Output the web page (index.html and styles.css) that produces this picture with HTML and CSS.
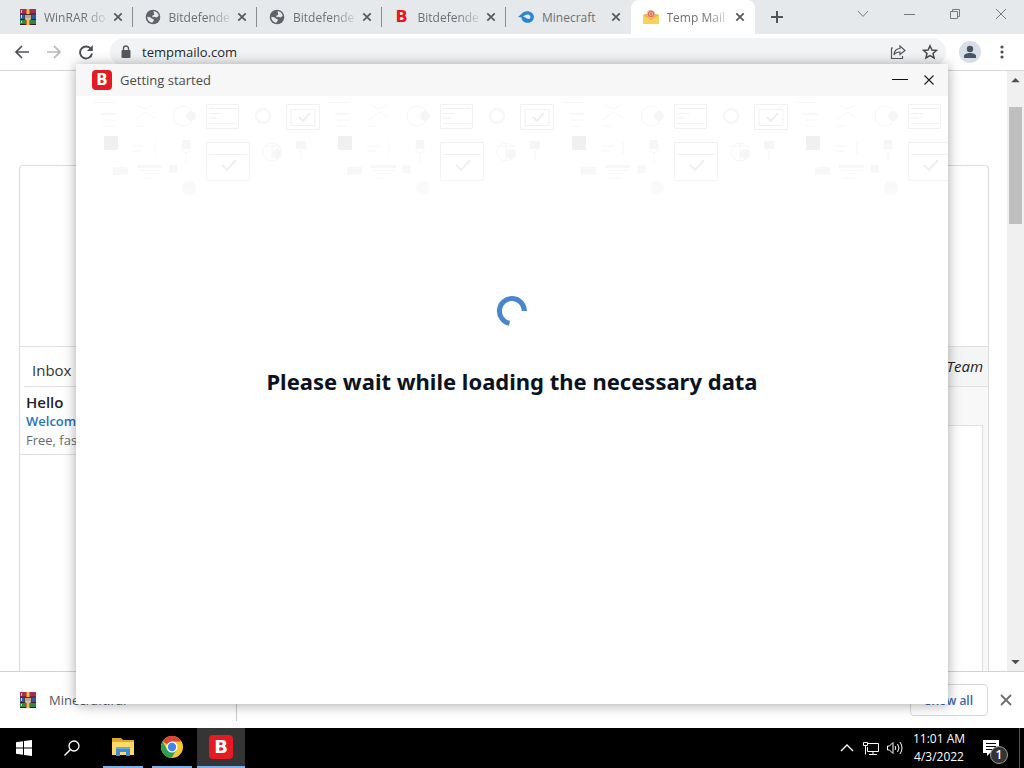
FILE: index.html
```html
<!DOCTYPE html>
<html lang="en">
<head>
<meta charset="utf-8">
<meta name="viewport" content="width=device-width, initial-scale=1">
<title>Temp Mail</title>
<link rel="stylesheet" href="styles.css">
</head>
<body>
<svg class="defs" aria-hidden="true">
  <symbol id="winrar" viewBox="0 0 16 16">
    <path fill="#a8304e" d="M0 0h16v5H0z"/><path fill="#2c5aa8" d="M0 5h16v5H0z"/><path fill="#2b8a3c" d="M0 10h16v6H0z"/>
    <path fill="#3b1828" d="M0 4.500h16v1H0zM0 10h16v1H0zM0 15h16v1H0z"/>
    <path fill="#d8d2e4" d="M1 1h1v3H1zM1 6h1v3H1zM1 12h1v2H1z"/>
    <path fill="#d9692e" d="M6 0h4v16H6z"/><path fill="#f3c24c" d="M7 0h2v5H7zM7 11h2v5H7z"/>
    <path fill="#58301c" d="M4.500 5h7v6h-7z"/><path fill="none" stroke="#f4ead8" stroke-width="1.300" d="M6 6v4h4V6M8 6v3"/>
  </symbol>
  <symbol id="globe" viewBox="0 0 16 16">
    <circle cx="8" cy="8" r="7.300" fill="#5f6368"/>
    <path fill="#e7eaed" d="M8.500 2.200c2.800 0 5 2.200 5.200 4.800l-2.200 1.400-2-.6-1.800.6-.5-1.700 2-1-.2-1.200zM2.300 7.800l3 .4 1.700 1.600 1.700.4v1.600l-1.500 1.900C4.400 13.300 2.200 10.800 2.300 7.800z"/>
  </symbol>
  <symbol id="cross" viewBox="0 0 16 16"><path d="M4.300 4.300l7.400 7.400m0-7.400l-7.400 7.400" fill="none" stroke="currentColor" stroke-width="1.700"/></symbol>
</svg>

<div class="desktop">
  <section class="browser">
    <header class="tabstrip">
      <nav class="tabs">
        <div class="tab"><svg class="icon"><use href="#winrar"/></svg><span class="tab-title">WinRAR do</span><button class="tab-close" aria-label="Close tab"><svg class="icon"><use href="#cross"/></svg></button></div>
        <div class="tab"><svg class="icon"><use href="#globe"/></svg><span class="tab-title">Bitdefende</span><button class="tab-close" aria-label="Close tab"><svg class="icon"><use href="#cross"/></svg></button></div>
        <div class="tab"><svg class="icon"><use href="#globe"/></svg><span class="tab-title">Bitdefende</span><button class="tab-close" aria-label="Close tab"><svg class="icon"><use href="#cross"/></svg></button></div>
        <div class="tab"><span class="b-favicon">B</span><span class="tab-title">Bitdefende</span><button class="tab-close" aria-label="Close tab"><svg class="icon"><use href="#cross"/></svg></button></div>
        <div class="tab no-line"><svg class="icon" viewBox="0 0 16 16"><path fill="#2a86d1" d="M0 8L5 3.500C8 1.500 11.500 1.800 13.800 3.800c2.800 2.400 2.700 6.200.2 8.400-2.700 2.400-7.300 2.200-9.500-.7C3.800 10.500 3.500 9.500 3.600 8.600z"/><path fill="#e7eaed" d="M5 7.800C7 5.800 9.500 5 11.300 5.900c1.700.9 1.600 3.300-.1 4-1.900.8-2.700-1.500-6.200-2.100z"/></svg><span class="tab-title whole">Minecraft</span><button class="tab-close" aria-label="Close tab"><svg class="icon"><use href="#cross"/></svg></button></div>
        <div class="tab active"><svg class="icon" viewBox="0 0 16 16"><path fill="#e5b83e" d="M0 6l3-1h10l3 1v9H0z"/><circle cx="8" cy="5" r="4" fill="#f4b6a8"/><circle cx="8" cy="5" r="2.600" fill="none" stroke="#e0705c" stroke-width="1.200"/><circle cx="8" cy="5" r="1" fill="#dc5440"/><path fill="#f6d25c" d="M0 6l8 5 8-5v9H0z"/></svg><span class="tab-title">Temp Mail</span><button class="tab-close" aria-label="Close tab"><svg class="icon"><use href="#cross"/></svg></button></div>
      </nav>
      <button class="new-tab" aria-label="New tab"><svg class="icon" viewBox="0 0 16 16"><path d="M8 2v12M2 8h12" stroke="#50555a" stroke-width="2"/></svg></button>
      <div class="window-buttons">
        <button aria-label="Search tabs"><svg class="icon" viewBox="0 0 16 16"><path d="M3 5l5 5.500L13 5" fill="none" stroke="currentColor"/></svg></button>
        <button aria-label="Minimize"><svg class="icon" viewBox="0 0 16 16"><path d="M3 8.500h11" stroke="currentColor"/></svg></button>
        <button aria-label="Restore"><svg class="icon" viewBox="0 0 16 16"><path d="M3.500 5.500h7v7h-7zM5.500 5.500v-2h7v7h-2" fill="none" stroke="currentColor"/></svg></button>
        <button aria-label="Close"><svg class="icon" viewBox="0 0 16 16"><path d="M3 3l10 10M13 3L3 13" stroke="currentColor"/></svg></button>
      </div>
    </header>

    <div class="toolbar">
      <button aria-label="Back"><svg class="icon" viewBox="0 0 16 16"><path d="M15 8H2M8 2L2 8l6 6" fill="none" stroke="#4d5156" stroke-width="1.700"/></svg></button>
      <button aria-label="Forward"><svg class="icon" viewBox="0 0 16 16"><path d="M1 8h13M8 2l6 6-6 6" fill="none" stroke="#b4b6b9" stroke-width="1.700"/></svg></button>
      <button aria-label="Reload"><svg class="icon" viewBox="0 0 16 16"><path d="M13 5A6 6 0 1 0 14 9.500" fill="none" stroke="#4d5156" stroke-width="1.900"/><path fill="#4d5156" d="M14.800 1v6H9z"/></svg></button>
      <div class="address">
        <svg class="icon" viewBox="0 0 16 16"><path fill="#55595e" d="M4.500 6h7q1 0 1 1v6q0 1-1 1h-7q-1 0-1-1V7q0-1 1-1z"/><path d="M5.500 6.500V4.500a2.500 2.500 0 0 1 5 0v2" fill="none" stroke="#55595e" stroke-width="1.400"/></svg>
        <input class="url" type="text" value="tempmailo.com" aria-label="Address">
        <button aria-label="Share"><svg class="icon" viewBox="0 0 16 16"><path d="M3 4H1.500v10.500h11V12M10 2l5 4.500-5 4V8C7 8 5 9 4 11c0-4 2.500-6.500 6-6.500z" fill="none" stroke="#55595e" stroke-width="1.200"/></svg></button>
        <button aria-label="Bookmark"><svg class="icon" viewBox="0 0 16 16"><path d="M8 1.800l1.900 4.200 4.600.4-3.500 3 1.100 4.500L8 11.500l-4.100 2.400L5 9.400l-3.500-3 4.600-.4z" fill="none" stroke="#45494e" stroke-width="1.500"/></svg></button>
      </div>
      <button class="avatar" aria-label="Profile"><svg class="icon" viewBox="0 0 16 16"><circle cx="8" cy="5" r="3.200" fill="#4a5362"/><path fill="#4a5362" d="M2 14v-2c0-4 12-4 12 0v2z"/></svg></button>
      <button aria-label="Menu"><svg class="icon" viewBox="0 0 16 16"><g fill="#4d5156"><circle cx="8" cy="3" r="1.600"/><circle cx="8" cy="8" r="1.600"/><circle cx="8" cy="13" r="1.600"/></g></svg></button>
    </div>

    <div class="viewport">
      <main class="page">
        <div class="mailbox">
          <div class="mail-top"></div>
          <div class="panes">
            <section class="list">
              <h2 class="list-title">Inbox</h2>
              <a class="mail" href="#"><strong>Hello</strong><span class="subject">Welcome</span><span class="preview">Free, fast</span></a>
            </section>
            <section class="reader">
              <div class="from"><em>Team</em></div>
              <div class="reader-body"></div>
            </section>
          </div>
        </div>
      </main>
      <div class="scrollbar">
        <svg class="arrow" viewBox="0 0 16 16"><path fill="#505050" d="M4 10l4-4 4 4z"/></svg>
        <div class="track"><div class="thumb"></div></div>
        <svg class="arrow" viewBox="0 0 16 16"><path fill="#505050" d="M4 6l4 4 4-4z"/></svg>
      </div>
    </div>

    <footer class="downloads">
      <div class="download"><svg class="icon"><use href="#winrar"/></svg><span>Minecraft.rar</span></div>
      <button class="show-all">Show all</button>
      <button class="close-downloads" aria-label="Close downloads"><svg class="icon" viewBox="0 0 16 16"><path d="M3 3l10 10M13 3L3 13" stroke="#6a6e72" stroke-width="1.800"/></svg></button>
    </footer>
  </section>

  <section class="dialog" role="dialog" aria-labelledby="dialog-title">
    <header class="dialog-bar">
      <span class="b-logo">B</span>
      <h1 id="dialog-title" class="dialog-title">Getting started</h1>
      <button aria-label="Minimize"><svg class="icon" viewBox="0 0 16 16"><path d="M0 7.500h16" stroke="#111"/></svg></button>
      <button aria-label="Close"><svg class="icon" viewBox="0 0 16 16"><path d="M3.500 3.500l9 9m0-9l-9 9" stroke="#222" stroke-width="1.200"/></svg></button>
    </header>
    <div class="dialog-body">
      <svg class="pattern" aria-hidden="true">
        <defs>
          <pattern id="tile" x="15" y="0" width="234" height="130" patternUnits="userSpaceOnUse">
            <g fill="none" stroke="#f6f6f6">
              <path d="M3 6.500h21M12 24h13M12 30h10"/>
              <path d="M46 9l8 4 8-4M44 24l10-8 10 6M44 30h8"/>
              <circle cx="92" cy="20" r="10"/><circle cx="172" cy="20" r="7" stroke-width="2"/>
              <circle cx="181" cy="56" r="9"/><path d="M172 50h18M181 47v18M205 50l5 6 5-6M210 56v8"/>
              <path d="M42 50h12M42 55h9M64 46v12M91 48q4-5 8 0v6q-4 6-8 0zM95 58v8"/>
              <path d="M46 70.500h25M48 74.500h22M50 82h12M24 78l6-8 7 8"/>
            </g>
            <path d="M10 18h15M115.500 8.500h32v24h-32zM118 12.500h28M118 17.500h12M118 22h8M118 27.500h28M195.500 8.500h33v25h-33zM200 13.500h24v16h-24zM115.500 46.500h43v38h-43zM118 58.500h38" fill="none" stroke="#f1f1f1"/>
            <path d="M208 21l4 4 7-8M131 69l5 5 9-10" fill="none" stroke="#eee" stroke-width="2"/>
            <path fill="#f0f0f0" d="M13 40h14v14H13z"/>
            <g fill="#f6f6f6"><path d="M22 71h15v8H22zM91 44h8v9h-8zM78 69h8v8h-8zM46 69h25v3H46zM205 45h10v8h-10z"/><circle cx="100" cy="20" r="5"/><circle cx="186" cy="58" r="5"/><circle cx="98" cy="92" r="7"/></g>
          </pattern>
        </defs>
        <rect x="15" width="100%" height="100%" fill="url(#tile)"/>
      </svg>
      <div class="loading" role="status">
        <svg class="spinner" viewBox="0 0 32 32"><path d="M28.400 16A12.500 12.500 0 1 0 13.500 28.300" fill="none" stroke="#4a86cf" stroke-width="5"/></svg>
        <p class="message">Please wait while loading the necessary data</p>
      </div>
    </div>
  </section>

  <footer class="taskbar">
    <button class="task" aria-label="Start"><svg class="icon" viewBox="0 0 16 16"><path fill="#fff" d="M0 2.200l7-1v6.300H0zM8 1l8-1v7.500H8zM0 8.500h7v6.300l-7-1zM8 8.500h8V16l-8-1z"/></svg></button>
    <button class="task" aria-label="Search"><svg class="icon" viewBox="0 0 16 16"><circle cx="10" cy="6" r="5" fill="none" stroke="#fff" stroke-width="1.300"/><path d="M6.500 9.500L.5 15.500" stroke="#fff" stroke-width="1.400"/></svg></button>
    <button class="task running" aria-label="File Explorer"><svg class="task-icon" viewBox="0 0 24 24"><path fill="#e3a72f" d="M1 3h9l2 2h11v15H1z"/><path fill="#ffd968" d="M1 7h22v13H1z"/><path fill="#3f8cd0" d="M5 13h14v8h-4v-4H9v4H5z"/><path fill="#67acdf" d="M5 12h14v2H5z"/></svg></button>
    <button class="task running" aria-label="Chrome"><svg class="task-icon" viewBox="0 0 24 24"><circle cx="12" cy="12" r="11" fill="#f8c82e"/><path fill="#dc4437" d="M12 12L2.500 6.500A11 11 0 0 1 21.500 6.500H12z"/><path fill="#2f9e55" d="M2.500 6.500A11 11 0 0 0 11.500 23L16.500 14.500 12 12 7.200 14.800z"/><circle cx="12" cy="12" r="5.500" fill="#fff"/><circle cx="12" cy="12" r="4.200" fill="#4385ee"/></svg></button>
    <button class="task running current" aria-label="Bitdefender"><span class="b-logo large">B</span></button>
    <div class="tray">
      <svg class="icon" viewBox="0 0 16 16"><path d="M2 11l6-6 6 6" fill="none" stroke="#fff" stroke-width="1.400"/></svg>
      <svg class="icon" viewBox="0 0 16 16"><path d="M5 3.500h10.500v8H4.500V7M10 12v2.500M6 14.500h8M.5 2.500h4v3h-4zM2.500 5.500v9" fill="none" stroke="#fff"/></svg>
      <svg class="icon" viewBox="0 0 16 16"><path d="M.5 6h2l3.500-3.500v11L2.500 10h-2zM8 6q1.500 2 0 4M10.500 4q3 4 0 8M13 2q4 6 0 12" fill="none" stroke="#fff"/></svg>
      <time class="clock"><span>11:01 AM</span><span>4/3/2022</span></time>
      <button class="notify" aria-label="Notifications"><svg class="note" viewBox="0 0 18 18"><path fill="#fff" d="M1 1h16v13H8l-3 3v-3H1z"/><path d="M4 4.500h10M4 7.500h10M4 10.500h7" stroke="#000"/></svg><span class="badge">1</span></button>
    </div>
  </footer>
</div>
</body>
</html>
```
FILE: styles.css
```css
* { box-sizing: border-box; }

body {
  margin: 0;
  font-family: "Open Sans", "Noto Sans", sans-serif;
  font-size: 12px;
  color: #222;
}

button {
  display: flex;
  align-items: center;
  justify-content: center;
  flex: none;
  padding: 0;
  border: 0;
  background: none;
  color: inherit;
  font: inherit;
}

.defs { position: absolute; width: 0; height: 0; }
.icon { display: block; flex: none; width: 16px; height: 16px; }

.desktop {
  position: relative;
  display: flex;
  flex-direction: column;
  height: 100vh;
  overflow: hidden;
}

.browser { display: flex; flex: 1; flex-direction: column; min-height: 0; background: #fff; }

/* Tab strip */
.tabstrip { display: flex; align-items: stretch; height: 34px; padding-left: 8px; background: #e5e9ec; }
.tabs { display: flex; flex: 0 1 747px; min-width: 0; }
.tab {
  display: flex;
  flex: 1;
  align-items: center;
  gap: 8px;
  min-width: 0;
  padding: 0 7px 0 12px;
  color: #6c7074;
  background: linear-gradient(#8a8d90, #8a8d90) right center / 1px 20px no-repeat;
}
.tab.no-line { background: none; }
.tab.active { border-radius: 8px 8px 0 0; background: #fff; }
.tab-title {
  flex: 1;
  min-width: 0;
  margin-right: -8px;
  white-space: nowrap;
  mask-image: linear-gradient(to right, #000 60%, transparent);
}
.tab-title.whole { mask-image: none; }
.tab-close { color: #55595e; }
.b-favicon {
  width: 16px;
  color: #ea1420;
  font: bold 16px/16px "DejaVu Sans", sans-serif;
  text-align: center;
}
.new-tab { width: 44px; }
.window-buttons { display: flex; margin-left: auto; padding-bottom: 6px; color: #777b80; }
.window-buttons button { width: 46px; }

/* Toolbar */
.toolbar {
  display: flex;
  align-items: center;
  gap: 16px;
  height: 37px;
  padding: 0 14px;
  border-bottom: 1px solid #d5d7d9;
}
.address {
  display: flex;
  flex: 1;
  align-items: center;
  gap: 16px;
  height: 28px;
  padding: 0 8px;
  border-radius: 14px;
  background: #f1f3f4;
}
.url {
  flex: 1;
  min-width: 0;
  margin-left: -8px;
  padding: 0;
  border: 0;
  background: none;
  color: #26292c;
  font: inherit;
  font-size: 13px;
}
.avatar { width: 22px; height: 22px; margin: 0 -3px; border-radius: 50%; background: #d8dee8; }

/* Web page */
.viewport { display: flex; flex: 1; min-height: 0; }
.page { display: flex; flex: 1; min-width: 0; padding: 94px 18px 0 19px; }
.mailbox {
  display: flex;
  flex: 1;
  flex-direction: column;
  border: 1px solid #dcdcdc;
  border-bottom: 0;
  border-radius: 4px 4px 0 0;
}
.mail-top { height: 180px; }
.panes { display: grid; flex: 1; grid-template-columns: 1fr 2fr; border-top: 1px solid #dfdfdf; }
.list-title {
  height: 40px;
  margin: 0 0 0 4px;
  padding: 3px 0 0 8px;
  border-bottom: 1px solid #dfdfdf;
  color: #333;
  font-size: 15px;
  font-weight: 400;
  line-height: 40px;
}
.mail {
  display: flex;
  flex-direction: column;
  height: 68px;
  padding: 6px;
  border-bottom: 1px solid #dfdfdf;
  color: #222;
  font-size: 13px;
  line-height: 19px;
  text-decoration: none;
}
.mail strong { font-size: 15px; font-weight: 600; }
.subject { color: #2474bf; font-weight: 600; }
.preview { color: #6a6a6a; }
.reader { display: flex; flex-direction: column; background: #f8f8f8; }
.from {
  height: 40px;
  padding-right: 5px;
  border-bottom: 1px solid #dfdfdf;
  background: #f4f5f5;
  font-size: 15px;
  line-height: 38px;
  text-align: right;
}
.reader-body { flex: 1; margin: 38px 5px 0 0; border: 1px solid #e0e0e0; border-bottom: 0; background: #fff; }

.scrollbar { display: flex; flex-direction: column; width: 17px; background: #f0f0f0; }
.arrow { width: 17px; height: 18px; }
.track { flex: 1; padding: 18px 2px 0; }
.thumb { height: 117px; background: #bfbfbf; }

/* Downloads */
.downloads {
  display: flex;
  align-items: center;
  gap: 10px;
  height: 57px;
  padding: 0 10px 0 20px;
  border-top: 1px solid #d2d2d2;
  background: #fff;
}
.download {
  display: flex;
  align-items: center;
  gap: 13px;
  width: 217px;
  height: 42px;
  margin-right: auto;
  border-right: 1px solid #c8c8c8;
  color: #55595e;
  font-size: 13px;
}
.show-all {
  width: 78px;
  height: 32px;
  border: 1px solid #d5d7da;
  border-radius: 4px;
  color: #3a68a8;
  font-weight: 600;
}

/* Dialog window, floating above the browser */
.dialog {
  position: absolute;
  inset: 64px 76px;
  display: flex;
  flex-direction: column;
  background: #fff;
  box-shadow: 0 1px 12px rgba(0, 0, 0, .35);
}
.dialog-bar { display: flex; align-items: center; gap: 13px; height: 32px; padding: 0 11px 0 16px; background: #f7f7f7; }
.dialog-title { flex: 1; margin: 0 0 0 -5px; color: #4c4c4c; font-size: 13px; font-weight: 400; }
.b-logo {
  width: 20px;
  border-radius: 4px;
  background: #e41b25;
  color: #fff;
  font: bold 15px/20px "DejaVu Sans", sans-serif;
  text-align: center;
}
.b-logo.large { width: 24px; font-size: 18px; line-height: 24px; }
.dialog-body { display: flex; flex: 1; flex-direction: column; }
.pattern {
  width: 100%;
  height: 130px;
  mask-image: linear-gradient(#000 50%, transparent);
}
.loading { display: flex; flex-direction: column; align-items: center; gap: 36px; margin-top: 69px; }
.spinner { width: 32px; height: 32px; }
.message {
  margin: 0;
  color: #0b1222;
  font-family: "Noto Sans", sans-serif;
  font-size: 22px;
  font-weight: 700;
  line-height: 36px;
  text-align: center;
}

/* Taskbar */
.taskbar { display: flex; height: 40px; background: #000; color: #fff; }
.task { width: 48px; }
.task.running { width: 40px; margin: 0 2px 0 7px; border-bottom: 2px solid #78b2e8; }
.task.running.current { width: 48px; margin: 0 0 0 3px; background: #353535; }
.task-icon { width: 24px; height: 24px; }
.tray { display: flex; align-items: center; gap: 8px; margin-left: auto; padding-right: 4px; }
.clock { display: flex; flex-direction: column; width: 56px; line-height: 18px; font-size: 12px; text-align: center; white-space: nowrap; }
.notify { position: relative; width: 45px; height: 40px; border-right: 1px solid #555; }
.note { width: 18px; height: 18px; margin-right: 12px; }
.badge {
  position: absolute;
  left: 15px;
  top: 18px;
  width: 18px;
  border: 1px solid #999;
  border-radius: 50%;
  background: #333;
  font-size: 12px;
  font-weight: 600;
  line-height: 16px;
}
```
